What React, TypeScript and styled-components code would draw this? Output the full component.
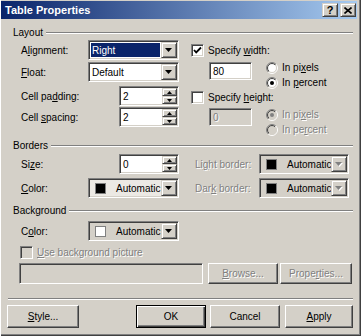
import React from "react";
import styled, { createGlobalStyle, css } from "styled-components";

const GlobalStyle = createGlobalStyle`
  * { box-sizing: border-box; }
  html, body { margin: 0; padding: 0; background: #d4d0c8; }
  body { font-family: "Liberation Sans", Arial, sans-serif; font-size: 10px; color: #000; }
`;

const sunken = css`
  border: 1px solid;
  border-color: #808080 #ffffff #ffffff #808080;
  box-shadow: inset 1px 1px 0 #404040, inset -1px -1px 0 #d4d0c8;
`;

const raised = css`
  border: 1px solid;
  border-color: #d4d0c8 #404040 #404040 #d4d0c8;
  box-shadow: inset 1px 1px 0 #ffffff, inset -1px -1px 0 #808080;
`;

const disabledText = css`
  color: #808080;
  text-shadow: 1px 1px 0 #ffffff;
`;

const Window = styled.div`
  width: 361px;
  height: 336px;
  background: #d4d0c8;
  padding: 1px 4px 3px 1px;
  box-shadow: inset 1px 0 0 #ffffff, inset -1px -1px 0 #404040, inset -2px -2px 0 #808080;
  display: flex;
  flex-direction: column;
`;

const TitleBar = styled.div`
  height: 18px;
  display: flex;
  align-items: center;
  justify-content: space-between;
  background: linear-gradient(to right, #0a246a, #a6caf0);
  color: #ffffff;
  font-weight: bold;
  font-size: 11px;
  padding: 0 1px 0 4px;
`;

const CaptionButtons = styled.div`
  display: flex;
  gap: 2px;
`;

const CaptionButton = styled.div`
  width: 16px;
  height: 14px;
  background: #d4d0c8;
  ${raised};
  display: flex;
  align-items: center;
  justify-content: center;
  color: #000;
  font-weight: bold;
  font-size: 11px;
  line-height: 1;
`;

const Body = styled.div`
  display: flex;
  flex-direction: column;
  padding: 0 4px 0 6px;
`;

const GroupHeader = styled.div<{ $mt: number }>`
  display: flex;
  align-items: center;
  gap: 3px;
  height: 13px;
  margin: ${(p) => p.$mt}px 0 0 6px;
  &::after {
    content: "";
    flex: 1;
    border-top: 1px solid #808080;
    border-bottom: 1px solid #ffffff;
  }
`;

const FieldGrid = styled.div<{ $mt: number }>`
  display: grid;
  grid-template-columns: 158px 161px;
  column-gap: 12px;
  align-items: start;
  margin: ${(p) => p.$mt}px 0 0 14px;
`;

const Column = styled.div`
  display: flex;
  flex-direction: column;
`;

const FieldRow = styled.div<{ $h: number; $mt?: number; $spread?: boolean; $pad?: string }>`
  display: flex;
  align-items: center;
  gap: 4px;
  height: ${(p) => p.$h}px;
  margin-top: ${(p) => p.$mt ?? 0}px;
  justify-content: ${(p) => (p.$spread ? "space-between" : "flex-start")};
  padding: ${(p) => p.$pad ?? "0"};
`;

const Label = styled.span<{ $disabled?: boolean }>`
  white-space: nowrap;
  ${(p) => p.$disabled && disabledText};
`;

const ComboBox = styled.div<{ $w: number; $bg?: string }>`
  width: ${(p) => p.$w}px;
  height: 20px;
  ${sunken};
  padding: 1px;
  background: ${(p) => p.$bg ?? "#ffffff"};
  display: flex;
`;

const ComboValue = styled.div<{ $selected?: boolean }>`
  flex: 1;
  display: flex;
  align-items: center;
  padding-left: 2px;
  white-space: nowrap;
  ${(p) =>
    p.$selected &&
    css`
      background: #0a246a;
      color: #ffffff;
      margin: 1px 1px 1px 1px;
      padding-left: 1px;
    `};
`;

const ColorValue = styled.div`
  flex: 1;
  display: flex;
  align-items: center;
  gap: 10px;
  padding-left: 5px;
  white-space: nowrap;
`;

const Swatch = styled.span<{ $color: string }>`
  width: 11px;
  height: 11px;
  background: ${(p) => p.$color};
  border: 1px solid #808080;
`;

const DropButton = styled.div`
  width: 16px;
  height: 16px;
  background: #d4d0c8;
  ${raised};
  display: flex;
  align-items: center;
  justify-content: center;
`;

const SpinBox = styled.div`
  width: 60px;
  height: 20px;
  ${sunken};
  padding: 1px;
  background: #ffffff;
  display: flex;
`;

const SpinButtons = styled.div`
  width: 15px;
  display: flex;
  flex-direction: column;
`;

const SpinHalf = styled.div`
  flex: 1;
  background: #d4d0c8;
  ${raised};
  display: flex;
  align-items: center;
  justify-content: center;
`;

const TextBox = styled.div<{ $w: number; $h: number; $disabled?: boolean; $mt?: number }>`
  width: ${(p) => p.$w}px;
  height: ${(p) => p.$h}px;
  margin-top: ${(p) => p.$mt ?? 0}px;
  ${sunken};
  background: ${(p) => (p.$disabled ? "#d4d0c8" : "#ffffff")};
  display: flex;
  align-items: center;
  padding-left: 3px;
  ${(p) => p.$disabled && disabledText};
`;

const CheckBox = styled.div<{ $disabled?: boolean }>`
  width: 13px;
  height: 13px;
  flex: none;
  ${sunken};
  background: ${(p) => (p.$disabled ? "#d4d0c8" : "#ffffff")};
  display: flex;
  align-items: center;
  justify-content: center;
`;

const OptionBlock = styled.div<{ $mt: number }>`
  display: flex;
  align-items: flex-start;
  margin: ${(p) => p.$mt}px 0 0 18px;
  gap: 14px;
`;

const RadioList = styled.div`
  display: flex;
  flex-direction: column;
`;

const RadioRow = styled.div`
  display: flex;
  align-items: center;
  gap: 4px;
  height: 15px;
`;

const StandaloneRow = styled.div<{ $h: number; $mt: number; $ml: number; $gap?: number }>`
  display: flex;
  align-items: center;
  height: ${(p) => p.$h}px;
  margin: ${(p) => p.$mt}px 0 0 ${(p) => p.$ml}px;
  gap: ${(p) => p.$gap ?? 4}px;
`;

const Separator = styled.div<{ $mt: number }>`
  margin: ${(p) => p.$mt}px 0 0 1px;
  border-top: 1px solid #808080;
  border-bottom: 1px solid #ffffff;
`;

const ButtonBar = styled.div`
  display: flex;
  align-items: center;
  margin-top: 5px;
`;

const ButtonGroup = styled.div`
  display: flex;
  margin-left: auto;
  gap: 4px;
`;

const PushButton = styled.button<{ $w: number; $h?: number; $default?: boolean; $disabled?: boolean; $ml?: number }>`
  width: ${(p) => p.$w}px;
  height: ${(p) => p.$h ?? 23}px;
  margin: 0 0 0 ${(p) => p.$ml ?? 0}px;
  padding: 0;
  font: inherit;
  background: #d4d0c8;
  color: #000;
  display: flex;
  align-items: center;
  justify-content: center;
  border: 1px solid;
  border-color: #ffffff #404040 #404040 #ffffff;
  box-shadow: inset -1px -1px 0 #808080;
  ${(p) =>
    p.$default &&
    css`
      border: 1px solid #000000;
      box-shadow: inset 1px 1px 0 #ffffff, inset -1px -1px 0 #404040, inset -2px -2px 0 #808080;
    `};
  ${(p) => p.$disabled && disabledText};
`;

const Arrow = ({ disabled }: { disabled?: boolean }) => (
  <svg width="8" height="5" viewBox="0 0 8 5">
    {disabled && <polygon points="1,1 8,1 4.5,5" fill="#ffffff" />}
    <polygon points="0,0 7,0 3.5,4" fill={disabled ? "#808080" : "#000000"} />
  </svg>
);

const SpinArrow = ({ up }: { up?: boolean }) => (
  <svg width="5" height="3" viewBox="0 0 5 3">
    <polygon points={up ? "2.5,0 5,3 0,3" : "0,0 5,0 2.5,3"} fill="#000000" />
  </svg>
);

const Check = () => (
  <svg width="9" height="9" viewBox="0 0 9 9">
    <polyline points="1,4 3.2,6.4 8,1.5" fill="none" stroke="#000" strokeWidth="1.8" />
  </svg>
);

const Radio = ({ checked, disabled }: { checked?: boolean; disabled?: boolean }) => (
  <svg width="12" height="12" viewBox="0 0 12 12" style={{ flex: "none" }}>
    <defs>
      <linearGradient id="rOuter" x1="0" y1="0" x2="1" y2="1">
        <stop offset="0.5" stopColor="#808080" />
        <stop offset="0.5" stopColor="#ffffff" />
      </linearGradient>
      <linearGradient id="rInner" x1="0" y1="0" x2="1" y2="1">
        <stop offset="0.5" stopColor="#404040" />
        <stop offset="0.5" stopColor="#d4d0c8" />
      </linearGradient>
    </defs>
    <circle cx="6" cy="6" r="5.5" fill="none" stroke="url(#rOuter)" strokeWidth="1" />
    <circle cx="6" cy="6" r="4.5" fill={disabled ? "#d4d0c8" : "#ffffff"} stroke="url(#rInner)" strokeWidth="1" />
    {checked && <circle cx="6" cy="6" r="2" fill={disabled ? "#808080" : "#000000"} />}
  </svg>
);

const CloseGlyph = () => (
  <svg width="8" height="7" viewBox="0 0 8 7">
    <path d="M0.5 0.5 L7.5 6.5 M7.5 0.5 L0.5 6.5" stroke="#000" strokeWidth="1.6" />
  </svg>
);

const Combo = ({ value, selected }: { value: string; selected?: boolean }) => (
  <ComboBox $w={91}>
    <ComboValue $selected={selected}>{value}</ComboValue>
    <DropButton>
      <Arrow />
    </DropButton>
  </ComboBox>
);

const ColorCombo = ({ w, color, bg, disabled }: { w: number; color: string; bg: string; disabled?: boolean }) => (
  <ComboBox $w={w} $bg={bg}>
    <ColorValue>
      <Swatch $color={color} />
      Automatic
    </ColorValue>
    <DropButton>
      <Arrow disabled={disabled} />
    </DropButton>
  </ComboBox>
);

const Spinner = ({ value }: { value: string }) => (
  <SpinBox>
    <ComboValue>{value}</ComboValue>
    <SpinButtons>
      <SpinHalf>
        <SpinArrow up />
      </SpinHalf>
      <SpinHalf>
        <SpinArrow />
      </SpinHalf>
    </SpinButtons>
  </SpinBox>
);

export default function App() {
  return (
    <>
      <GlobalStyle />
      <Window>
        <TitleBar>
          <span>Table Properties</span>
          <CaptionButtons>
            <CaptionButton>?</CaptionButton>
            <CaptionButton>
              <CloseGlyph />
            </CaptionButton>
          </CaptionButtons>
        </TitleBar>
        <Body>
          <GroupHeader $mt={7}>Layout</GroupHeader>
          <FieldGrid $mt={1}>
            <Column>
              <FieldRow $h={20} $spread>
                <Label>A<u>l</u>ignment:</Label>
                <Combo value="Right" selected />
              </FieldRow>
              <FieldRow $h={20} $mt={2} $spread>
                <Label><u>F</u>loat:</Label>
                <Combo value="Default" />
              </FieldRow>
              <FieldRow $h={20} $mt={4} $spread>
                <Label>Cell pa<u>d</u>ding:</Label>
                <Spinner value="2" />
              </FieldRow>
              <FieldRow $h={20} $mt={1} $spread>
                <Label>Cell <u>s</u>pacing:</Label>
                <Spinner value="2" />
              </FieldRow>
            </Column>
            <Column>
              <FieldRow $h={16} $mt={2}>
                <CheckBox>
                  <Check />
                </CheckBox>
                <Label>Specify <u>w</u>idth:</Label>
              </FieldRow>
              <OptionBlock $mt={2}>
                <TextBox $w={43} $h={18} $mt={2}>80</TextBox>
                <RadioList>
                  <RadioRow>
                    <Radio />
                    <Label>In pi<u>x</u>els</Label>
                  </RadioRow>
                  <RadioRow>
                    <Radio checked />
                    <Label>In <u>p</u>ercent</Label>
                  </RadioRow>
                </RadioList>
              </OptionBlock>
              <FieldRow $h={16} $mt={-1}>
                <CheckBox />
                <Label>Specify <u>h</u>eight:</Label>
              </FieldRow>
              <OptionBlock $mt={2}>
                <TextBox $w={43} $h={18} $mt={1} $disabled>0</TextBox>
                <RadioList>
                  <RadioRow>
                    <Radio checked disabled />
                    <Label $disabled>In pi<u>x</u>els</Label>
                  </RadioRow>
                  <RadioRow>
                    <Radio disabled />
                    <Label $disabled>In pe<u>r</u>cent</Label>
                  </RadioRow>
                </RadioList>
              </OptionBlock>
            </Column>
          </FieldGrid>

          <GroupHeader $mt={2}>Borders</GroupHeader>
          <FieldGrid $mt={2}>
            <Column>
              <FieldRow $h={20} $spread>
                <Label>Si<u>z</u>e:</Label>
                <Spinner value="0" />
              </FieldRow>
              <FieldRow $h={20} $mt={4} $spread>
                <Label><u>C</u>olor:</Label>
                <ColorCombo w={91} color="#000000" bg="#ece9e4" />
              </FieldRow>
            </Column>
            <Column>
              <FieldRow $h={20} $spread $pad="0 3px 0 4px">
                <Label $disabled>Li<u>g</u>ht border:</Label>
                <ColorCombo w={90} color="#000000" bg="#d4d0c8" disabled />
              </FieldRow>
              <FieldRow $h={20} $mt={4} $spread $pad="0 3px 0 4px">
                <Label $disabled>Dar<u>k</u> border:</Label>
                <ColorCombo w={90} color="#000000" bg="#d4d0c8" disabled />
              </FieldRow>
            </Column>
          </FieldGrid>

          <GroupHeader $mt={6}>Background</GroupHeader>
          <FieldGrid $mt={4}>
            <Column>
              <FieldRow $h={20} $spread>
                <Label>C<u>o</u>lor:</Label>
                <ColorCombo w={91} color="#ffffff" bg="#d4d0c8" />
              </FieldRow>
            </Column>
          </FieldGrid>
          <StandaloneRow $h={16} $mt={3} $ml={13}>
            <CheckBox $disabled />
            <Label $disabled><u>U</u>se background picture</Label>
          </StandaloneRow>
          <StandaloneRow $h={21} $mt={3} $ml={12} $gap={0}>
            <TextBox $w={184} $h={21} $disabled />
            <PushButton $w={70} $h={21} $ml={5} $disabled><u>B</u>rowse...</PushButton>
            <PushButton $w={72} $h={21} $ml={2} $disabled>Prope<u>r</u>ties...</PushButton>
          </StandaloneRow>
          <Separator $mt={14} />
          <ButtonBar>
            <PushButton $w={72}><u>S</u>tyle...</PushButton>
            <ButtonGroup>
              <PushButton $w={70} $default>OK</PushButton>
              <PushButton $w={70}>Cancel</PushButton>
              <PushButton $w={68} $ml={1}><u>A</u>pply</PushButton>
            </ButtonGroup>
          </ButtonBar>
        </Body>
      </Window>
    </>
  );
}
